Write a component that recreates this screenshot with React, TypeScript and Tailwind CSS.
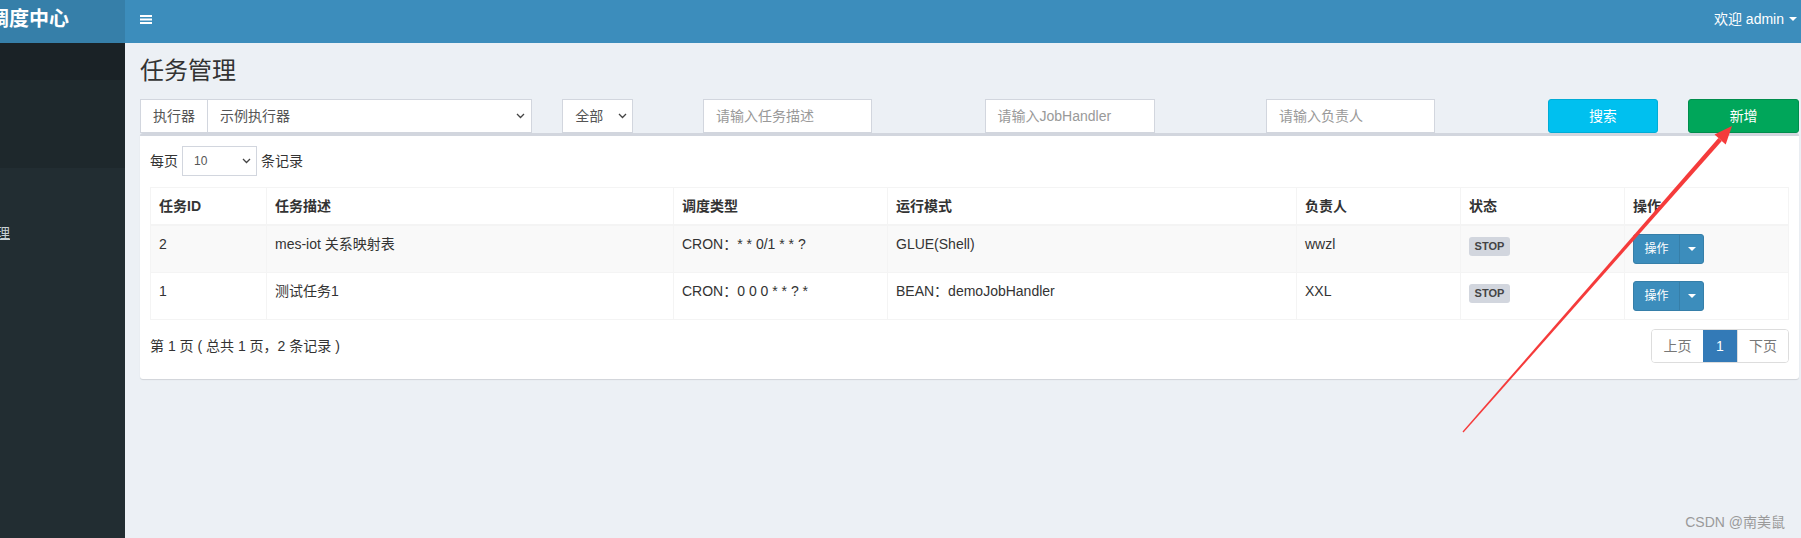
import React from "react";

const Chevron = () => (
  <svg width="9" height="6" viewBox="0 0 9 6" className="shrink-0">
    <path d="M1 1 L4.5 4.5 L8 1" fill="none" stroke="#444" strokeWidth="1.3" />
  </svg>
);

const OpButton = () => (
  <div className="inline-flex h-[30px] rounded-[3px] overflow-hidden border border-[#367fa9] bg-[#3c8dbc] text-white text-[12px] leading-[18px]">
    <span className="w-[45px] flex items-center justify-center">操作</span>
    <span className="w-[24px] flex items-center justify-center border-l border-[#367fa9]">
      <span className="w-0 h-0 border-l-[4px] border-r-[4px] border-t-[4px] border-l-transparent border-r-transparent border-t-white" />
    </span>
  </div>
);

const Stop = () => (
  <span className="mt-[3px] inline-flex w-[41px] h-[19px] items-center justify-center rounded-[3px] bg-[#d2d6de] text-[#444] text-[11px] font-bold leading-none">
    STOP
  </span>
);

const rows = [
  { id: "2", desc: "mes-iot 关系映射表", cron: "CRON：* * 0/1 * * ?", mode: "GLUE(Shell)", owner: "wwzl" },
  { id: "1", desc: "测试任务1", cron: "CRON：0 0 0 * * ? *", mode: "BEAN：demoJobHandler", owner: "XXL" },
];

export default function App() {
  return (
    <div className="relative flex w-[1801px] h-[538px] overflow-hidden font-['Liberation_Sans','Noto_Sans_CJK_SC',sans-serif] text-[14px] text-[#333]">
      {/* Sidebar */}
      <aside className="w-[125px] shrink-0 flex flex-col bg-[#222d32]">
        <div className="h-[43px] bg-[#367fa9] overflow-hidden flex items-center pb-[5px]">
          <span className="ml-[-51px] whitespace-nowrap text-[20px] font-bold text-white leading-[22px]">任务调度中心</span>
        </div>
        <div className="h-[37px] bg-[#1a2226]" />
        <div className="h-[88px] bg-[#1e282c]" />
        <div className="overflow-hidden pt-[55px]">
          <span className="block ml-[-46px] whitespace-nowrap text-[14px] leading-[20px] text-[#c8d0d4] underline">任务管理</span>
        </div>
      </aside>

      {/* Main */}
      <div className="flex-1 min-w-0 flex flex-col">
        <header className="h-[43px] shrink-0 bg-[#3c8dbc] flex items-center justify-between pl-[15px] pr-[4px] pb-[5px]">
          <svg width="12" height="9" viewBox="0 0 12 9">
            <rect x="0" y="0" width="12" height="2" fill="#fff" />
            <rect x="0" y="3.5" width="12" height="2" fill="#fff" />
            <rect x="0" y="7" width="12" height="2" fill="#fff" />
          </svg>
          <div className="flex items-center text-white text-[14px] leading-[20px]">
            <span>欢迎 admin</span>
            <span className="ml-[5px] w-0 h-0 border-l-[4px] border-r-[4px] border-t-[4px] border-l-transparent border-r-transparent border-t-white" />
          </div>
        </header>

        <main className="flex-1 bg-[#ecf0f5] overflow-hidden">
          <div className="w-[1689px] px-[15px]">
            <h1 className="pt-[15px] text-[24px] leading-[26px] font-normal text-[#333]">任务管理</h1>

            {/* Filter row */}
            <div className="mt-[15px] -mx-[15px] grid grid-cols-12">
              <div className="col-span-3 px-[15px]">
                <div className="flex h-[34px] text-[#555]">
                  <span className="w-[68px] shrink-0 flex items-center justify-center border border-[#d2d6de] bg-white">执行器</span>
                  <div className="flex-1 flex items-center justify-between border border-l-0 border-[#d2d6de] bg-white pl-[12px] pr-[6px]">
                    <span>示例执行器</span>
                    <Chevron />
                  </div>
                </div>
              </div>
              <div className="col-span-1 px-[15px]">
                <div className="w-[71px] h-[34px] flex items-center justify-between border border-[#d2d6de] bg-white pl-[12px] pr-[5px] text-[#555]">
                  <span>全部</span>
                  <Chevron />
                </div>
              </div>
              <div className="col-span-2 px-[15px]">
                <div className="w-[169px] h-[34px] flex items-center border border-[#d2d6de] bg-white pl-[12px] text-[#999]">请输入任务描述</div>
              </div>
              <div className="col-span-2 px-[15px]">
                <div className="w-[170px] h-[34px] flex items-center border border-[#d2d6de] bg-white pl-[12px] text-[#999]">请输入JobHandler</div>
              </div>
              <div className="col-span-2 px-[15px]">
                <div className="w-[169px] h-[34px] flex items-center border border-[#d2d6de] bg-white pl-[12px] text-[#999]">请输入负责人</div>
              </div>
              <div className="col-span-1 px-[15px]">
                <div className="h-[34px] flex items-center justify-center rounded-[3px] border border-[#00acd6] bg-[#00c0ef] text-white">搜索</div>
              </div>
              <div className="col-span-1 px-[15px]">
                <div className="h-[34px] flex items-center justify-center rounded-[3px] border border-[#008d4c] bg-[#00a65a] text-white">新增</div>
              </div>
            </div>

            {/* Card */}
            <div className="bg-white border-t-[3px] border-[#d2d6de] rounded-[3px] shadow-[0_1px_1px_rgba(0,0,0,0.12)] px-[10px] pt-[10px] pb-[16px]">
              <div className="flex items-center h-[30px]">
                <span>每页</span>
                <div className="ml-[4px] w-[75px] h-[30px] flex items-center justify-between border border-[#d2d6de] pl-[11px] pr-[5px] text-[12px] text-[#555]">
                  <span>10</span>
                  <Chevron />
                </div>
                <span className="ml-[4px]">条记录</span>
              </div>

              <table className="mt-[11px] w-full table-fixed border-collapse border border-[#f4f4f4]">
                <colgroup>
                  <col className="w-[116px]" />
                  <col className="w-[407px]" />
                  <col className="w-[214px]" />
                  <col className="w-[409px]" />
                  <col className="w-[164px]" />
                  <col className="w-[164px]" />
                  <col />
                </colgroup>
                <thead>
                  <tr>
                    {["任务ID", "任务描述", "调度类型", "运行模式", "负责人", "状态", "操作"].map((h) => (
                      <th key={h} className="text-left font-bold p-[8px] leading-[20px] border border-[#f4f4f4] border-b-2">{h}</th>
                    ))}
                  </tr>
                </thead>
                <tbody>
                  {rows.map((r, i) => (
                    <tr key={r.id} className={i === 0 ? "bg-[#f9f9f9]" : "bg-white"}>
                      <td className="p-[8px] leading-[20px] align-top border border-[#f4f4f4]">{r.id}</td>
                      <td className="p-[8px] leading-[20px] align-top border border-[#f4f4f4]">{r.desc}</td>
                      <td className="p-[8px] leading-[20px] align-top border border-[#f4f4f4]">{r.cron}</td>
                      <td className="p-[8px] leading-[20px] align-top border border-[#f4f4f4]">{r.mode}</td>
                      <td className="p-[8px] leading-[20px] align-top border border-[#f4f4f4]">{r.owner}</td>
                      <td className="p-[8px] leading-[20px] align-top border border-[#f4f4f4]"><Stop /></td>
                      <td className="p-[8px] leading-[20px] align-top border border-[#f4f4f4]"><OpButton /></td>
                    </tr>
                  ))}
                </tbody>
              </table>

              <div className="mt-[9px] flex items-center justify-between h-[34px]">
                <span>第 1 页 ( 总共 1 页，2 条记录 )</span>
                <div className="flex h-[34px] rounded-[4px] border border-[#ddd] overflow-hidden">
                  <span className="w-[51px] flex items-center justify-center text-[#777] bg-white">上页</span>
                  <span className="w-[34px] flex items-center justify-center text-white bg-[#337ab7]">1</span>
                  <span className="w-[51px] flex items-center justify-center text-[#777] bg-white border-l border-[#ddd]">下页</span>
                </div>
              </div>
            </div>
          </div>
        </main>
      </div>

      {/* Red annotation arrow */}
      <svg className="absolute left-0 top-0 pointer-events-none" width="1801" height="538" viewBox="0 0 1801 538">
        <polygon points="1463.5,432.5 1462.5,431.5 1718.4,138.1 1721.8,141.0" fill="#f53b3b" />
        <polygon points="1732,126 1725.7,144.5 1714.5,134.6" fill="#f53b3b" />
      </svg>

      {/* Watermark */}
      <span className="absolute right-[16px] top-[513px] text-[14px] leading-[18px] text-[#9a9a9a] whitespace-nowrap">CSDN @南美鼠</span>
    </div>
  );
}
